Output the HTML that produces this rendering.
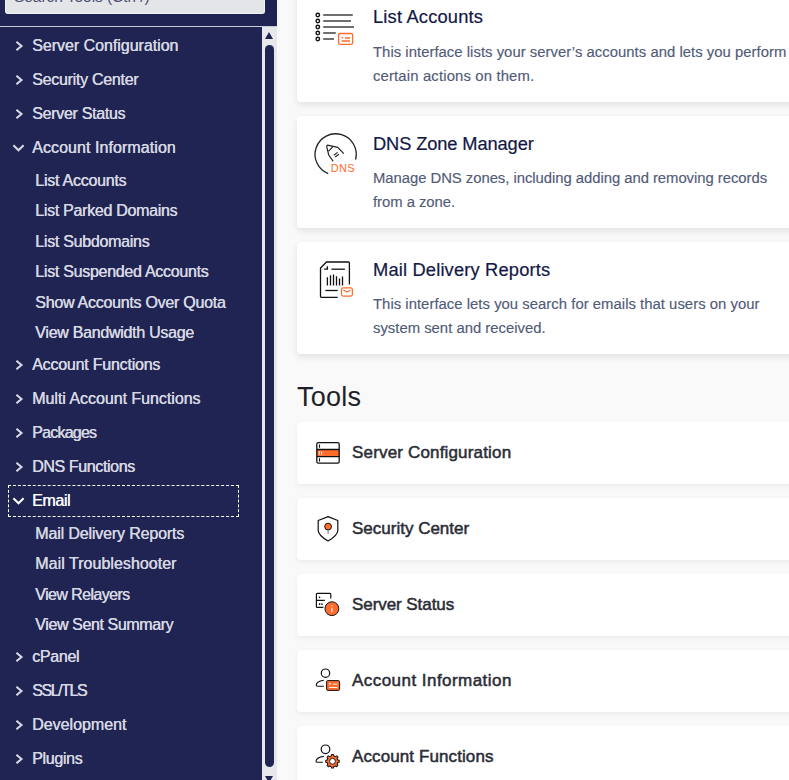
<!DOCTYPE html>
<html><head><meta charset="utf-8">
<style>
*{margin:0;padding:0;box-sizing:border-box}
html,body{width:789px;height:780px;overflow:hidden;background:#f9f9f9;font-family:"Liberation Sans",sans-serif}
#side{position:absolute;left:0;top:0;width:277px;height:780px;background:#1f2452;overflow:hidden}
#search{position:absolute;left:5px;top:-20px;width:260px;height:34px;background:#e4e5e9;border-radius:0 0 3px 3px;overflow:hidden;border:1px solid #f3f3f6;border-top:0}
#search span{position:absolute;left:8px;top:8.2px;letter-spacing:-0.05px;font-size:15.5px;color:#4b5071;white-space:nowrap}
#hline{position:absolute;left:0;top:26px;width:277px;height:1px;background:#c9cbd6}
#track{position:absolute;left:262px;top:27px;width:15px;height:753px;background:#e7e8eb}
#thumb{position:absolute;left:265px;top:45px;width:9px;height:722px;background:#1f2452;border-radius:5px}
.arr{position:absolute;left:265px;width:0;height:0;border-left:4.5px solid transparent;border-right:4.5px solid transparent}
.it{position:absolute;white-space:nowrap;color:#d6d7e1;font-size:16px;line-height:20px;text-shadow:0.4px 0 0 #d6d7e1}
.top{left:32px}
.sub{left:35.1px}
#focus{position:absolute;left:8px;top:485px;width:231px;height:32px;border:1px dashed #fff}
#main{position:absolute;left:277px;top:0;width:512px;height:780px;background:#f9f9f9}
.card{position:absolute;left:297px;width:560px;background:#fff;border-radius:4px;box-shadow:0 3px 6px rgba(35,45,75,.11)}
.ttl{position:absolute;left:373px;font-size:18.3px;color:#131845;white-space:nowrap;line-height:22px;-webkit-text-stroke:0.2px #131845}
.dsc{position:absolute;left:373px;font-size:14.85px;color:#505b78;white-space:nowrap;line-height:24px;-webkit-text-stroke:0.15px #505b78}
.tname{position:absolute;left:352px;font-size:17px;font-weight:normal;color:#2a2c35;white-space:nowrap;line-height:20px;-webkit-text-stroke:0.5px #2a2c35}
.tools{position:absolute;font-size:27px;color:#1e1f29;line-height:32px;white-space:nowrap}
svg{position:absolute;overflow:visible}
.tc{box-shadow:0 2px 5px rgba(35,45,75,.065)}

</style></head><body>
<div id="main"></div>
<div class="card" style="top:-10px;height:112px"></div>
<div class="card" style="top:116px;height:112px"></div>
<div class="card" style="top:242px;height:112px"></div>
<div class="card tc" style="top:422px;height:62px"></div>
<div class="card tc" style="top:498px;height:62px"></div>
<div class="card tc" style="top:574px;height:62px"></div>
<div class="card tc" style="top:650px;height:62px"></div>
<div class="card tc" style="top:726px;height:62px"></div>
<svg style="left:300px;top:0px" width="70" height="60" viewBox="300 0 70 60">
<g fill="none" stroke="#111" stroke-width="1.4">
<circle cx="317.8" cy="15" r="1.75"/><circle cx="317.8" cy="21" r="1.75"/><circle cx="317.8" cy="27" r="1.75"/><circle cx="317.8" cy="33" r="1.75"/><circle cx="317.8" cy="39" r="1.75"/>
</g>
<g stroke="#6f6f6f" stroke-width="1.9">
<path d="M323.2 15H352.8M323.2 21H351M323.2 27H354M323.2 33H335.8M323.2 39H334"/>
</g>
<rect x="338.6" y="33.5" width="14" height="10.8" rx="1.6" fill="#fff" stroke="#ff6c2c" stroke-width="1.3"/>
<circle cx="342.3" cy="37.6" r="0.9" fill="#ff6c2c"/>
<path d="M345 38H350M341.5 41H350" stroke="#ff6c2c" stroke-width="1.3"/>
</svg>
<svg style="left:300px;top:120px" width="70" height="70" viewBox="300 120 70 70">
<path d="M355.6 159.5 A20.6 20.6 0 1 0 328.2 173.6" fill="none" stroke="#222" stroke-width="1.3"/>
<path d="M333.2 161.3 L328.7 155 L326.6 146.2 L327.5 145.2 L337.7 147.4 L343.8 153.7" fill="none" stroke="#222" stroke-width="1.2" stroke-linejoin="round"/>
<path d="M328.4 151.3 L332.6 147" fill="none" stroke="#222" stroke-width="1.1"/>
<path d="M333.8 155.2 L337.6 152.4 M335.2 157 L338.9 154.2" fill="none" stroke="#222" stroke-width="1.1"/>
<text x="342.9" y="172" font-family="Liberation Sans" font-size="11" fill="#ff6c2c" text-anchor="middle" letter-spacing="0.3">DNS</text>
</svg>
<svg style="left:300px;top:245px" width="70" height="70" viewBox="300 245 70 70">
<g fill="none" stroke="#111" stroke-width="1.3" stroke-linecap="butt">
<path d="M349.4 284.5 V263 Q349.4 262 348.4 262 H326.5 L320.5 268 V296.6 Q320.5 297.3 321.3 297.3 H337.7"/>
<path d="M324.2 269.2 H327.4 V266.2"/>
<path d="M331.4 269.2 H344.9"/>
<path d="M325.4 290.5 H337.7"/>
<path d="M327.4 277.3V285.4M330.5 275.3V285.4M333.5 274.4V285.4M336.5 276.2V285.4M339.5 278.4V285.4M342.5 276.4V285.4"/>
</g>
<rect x="341.5" y="287.8" width="10.9" height="8.3" rx="1.8" fill="#fff" stroke="#ff6c2c" stroke-width="1.2"/>
<path d="M343.3 290 L346.9 292 L350.5 290" fill="none" stroke="#ff6c2c" stroke-width="1.1"/>
</svg>
<div class="ttl" style="top:6.16px;left:373.00px;letter-spacing:0.184px">List Accounts</div>
<div class="dsc" style="top:39.85px;left:373.00px;letter-spacing:0.036px">This interface lists your server’s accounts and lets you perform</div>
<div class="dsc" style="top:63.85px;left:373.00px;letter-spacing:0.155px">certain actions on them.</div>
<div class="ttl" style="top:133.06px;left:373.00px;letter-spacing:-0.120px">DNS Zone Manager</div>
<div class="dsc" style="top:165.55px;left:373.00px;letter-spacing:-0.037px">Manage DNS zones, including adding and removing records</div>
<div class="dsc" style="top:189.55px;left:373.00px;letter-spacing:-0.037px">from a zone.</div>
<div class="ttl" style="top:258.56px;left:373.00px;letter-spacing:0.170px">Mail Delivery Reports</div>
<div class="dsc" style="top:291.85px;left:373.00px;letter-spacing:0.034px">This interface lets you search for emails that users on your</div>
<div class="dsc" style="top:315.95px;left:373.00px;letter-spacing:0.007px">system sent and received.</div>
<div class="tools" style="top:381.24px;left:297.00px;letter-spacing:0.250px">Tools</div>
<div class="tname" style="top:442.71px;left:352.00px;letter-spacing:0.168px">Server Configuration</div>
<div class="tname" style="top:518.71px;left:352.00px">Security Center</div>
<div class="tname" style="top:594.71px;left:352.00px;letter-spacing:-0.067px">Server Status</div>
<div class="tname" style="top:670.71px;left:352.00px;letter-spacing:0.456px">Account Information</div>
<div class="tname" style="top:746.71px;left:352.00px;letter-spacing:0.100px">Account Functions</div>
<svg style="left:300px;top:425px" width="60" height="60" viewBox="300 425 60 60">
<rect x="316.8" y="449.8" width="22.4" height="6.6" fill="#ff6c2c"/>
<rect x="316.8" y="442.6" width="22.4" height="20.6" rx="1.6" fill="none" stroke="#111" stroke-width="1.3"/>
<path d="M316.8 449.5 H339.2 M316.8 456.6 H339.2" stroke="#111" stroke-width="1.3"/>
<path d="M319.5 444.4V447.8M319.5 458.2V461.6" stroke="#111" stroke-width="1.1"/>
<path d="M319.3 451.2V454.8M321.6 451.2V454.8" stroke="#fff" stroke-width="0.9"/>
</svg>
<svg style="left:300px;top:500px" width="60" height="60" viewBox="300 500 60 60">
<path d="M328.1 516.6 L318.2 520.5 V530.6 Q318.6 535.6 328.1 541 Q337.6 535.6 337.8 530.6 V520.5 Z" fill="none" stroke="#111" stroke-width="1.2" stroke-linejoin="round"/>
<path d="M328.1 530.3 V534" stroke="#777" stroke-width="1"/>
<circle cx="328.1" cy="526.6" r="3.4" fill="#ff6c2c" stroke="#111" stroke-width="1"/>
</svg>
<svg style="left:300px;top:575px" width="60" height="60" viewBox="300 575 60 60">
<path d="M330.8 598.4 V594.4 Q330.8 593.4 329.8 593.4 H317.4 Q316.4 593.4 316.4 594.4 V606.4 Q316.4 607.4 317.4 607.4 H323.4 M316.4 600.3 H324.8" fill="none" stroke="#111" stroke-width="1.2"/>
<path d="M319.6 596.4V598.1M319.6 603.3V605M322 603.3V605" stroke="#111" stroke-width="1.3"/>
<circle cx="331.9" cy="608.7" r="6.9" fill="#ff6c2c" stroke="#111" stroke-width="1"/>
<path d="M331.9 605V606.3M331.9 607.8V612.4" stroke="#ffe6da" stroke-width="1.3"/>
</svg>
<svg style="left:300px;top:650px" width="60" height="60" viewBox="300 650 60 60">
<circle cx="325.5" cy="673.2" r="4.2" fill="none" stroke="#111" stroke-width="1.2"/>
<path d="M323.8 680.3 C319 681 316.2 683.2 316.2 685.3 C316.2 686.4 318 686.3 323.8 686.3" fill="none" stroke="#111" stroke-width="1.1"/>
<rect x="326.6" y="680.6" width="13" height="9.8" rx="1.2" fill="#ff6c2c" stroke="#111" stroke-width="1"/>
<circle cx="329.9" cy="683.7" r="0.9" fill="#fff"/>
<path d="M333 684.2H337.3M329.2 687.5H337.4" stroke="#fff" stroke-width="0.9"/>
</svg>
<svg style="left:300px;top:725px" width="60" height="60" viewBox="300 725 60 60">
<circle cx="325.5" cy="749.3" r="4.3" fill="none" stroke="#111" stroke-width="1.2"/>
<path d="M324 756.2 C319 757 316 759.4 316 761.4 C316 762.4 318 762.3 322.8 762.3" fill="none" stroke="#111" stroke-width="1.1"/>
<path d="M331.22 755.95 L331.59 754.56 L333.41 754.56 L333.78 755.95 L335.37 756.61 L336.63 755.89 L337.91 757.17 L337.19 758.43 L337.85 760.02 L339.24 760.39 L339.24 762.21 L337.85 762.58 L337.19 764.17 L337.91 765.43 L336.63 766.71 L335.37 765.99 L333.78 766.65 L333.41 768.04 L331.59 768.04 L331.22 766.65 L329.63 765.99 L328.37 766.71 L327.09 765.43 L327.81 764.17 L327.15 762.58 L325.76 762.21 L325.76 760.39 L327.15 760.02 L327.81 758.43 L327.09 757.17 L328.37 755.89 L329.63 756.61 Z" fill="#ff6c2c" stroke="#1a1a1a" stroke-width="1.1" stroke-linejoin="round"/>
<circle cx="332.5" cy="761.3" r="2.9" fill="#fff" stroke="#111" stroke-width="0.9"/>
</svg>
<div id="side">
  <div id="search"><span>Search Tools (Ctrl /)</span></div>
  <div id="hline"></div>
<div class="it top" style="top:35.76px;letter-spacing:-0.026px">Server Configuration</div>
<svg class="chev" style="left:15px;top:40.65px" width="8" height="10" viewBox="0 0 8 10"><path d="M1.4 0.7 L6.5 5 L1.4 9.3" fill="none" stroke="#d8d9e2" stroke-width="2.1"/></svg>
<div class="it top" style="top:69.76px;letter-spacing:-0.271px">Security Center</div>
<svg class="chev" style="left:15px;top:74.65px" width="8" height="10" viewBox="0 0 8 10"><path d="M1.4 0.7 L6.5 5 L1.4 9.3" fill="none" stroke="#d8d9e2" stroke-width="2.1"/></svg>
<div class="it top" style="top:103.76px;letter-spacing:-0.292px">Server Status</div>
<svg class="chev" style="left:15px;top:108.65px" width="8" height="10" viewBox="0 0 8 10"><path d="M1.4 0.7 L6.5 5 L1.4 9.3" fill="none" stroke="#d8d9e2" stroke-width="2.1"/></svg>
<div class="it top" style="top:137.76px;letter-spacing:0.073px">Account Information</div>
<svg class="chev" style="left:12.1px;top:144.35px" width="13" height="8" viewBox="0 0 13 8"><path d="M1.4 1.3 L6.5 6.2 L11.6 1.3" fill="none" stroke="#d8d9e2" stroke-width="2.1"/></svg>
<div class="it sub" style="top:170.76px;letter-spacing:-0.242px">List Accounts</div>
<div class="it sub" style="top:200.76px;letter-spacing:-0.295px">List Parked Domains</div>
<div class="it sub" style="top:231.76px;letter-spacing:-0.278px">List Subdomains</div>
<div class="it sub" style="top:261.76px;letter-spacing:-0.282px">List Suspended Accounts</div>
<div class="it sub" style="top:292.76px;letter-spacing:-0.261px">Show Accounts Over Quota</div>
<div class="it sub" style="top:322.76px;letter-spacing:-0.278px">View Bandwidth Usage</div>
<div class="it top" style="top:354.76px;letter-spacing:-0.214px">Account Functions</div>
<svg class="chev" style="left:15px;top:359.65px" width="8" height="10" viewBox="0 0 8 10"><path d="M1.4 0.7 L6.5 5 L1.4 9.3" fill="none" stroke="#d8d9e2" stroke-width="2.1"/></svg>
<div class="it top" style="top:388.76px;letter-spacing:-0.027px">Multi Account Functions</div>
<svg class="chev" style="left:15px;top:393.65px" width="8" height="10" viewBox="0 0 8 10"><path d="M1.4 0.7 L6.5 5 L1.4 9.3" fill="none" stroke="#d8d9e2" stroke-width="2.1"/></svg>
<div class="it top" style="top:422.76px;letter-spacing:-0.771px">Packages</div>
<svg class="chev" style="left:15px;top:427.65px" width="8" height="10" viewBox="0 0 8 10"><path d="M1.4 0.7 L6.5 5 L1.4 9.3" fill="none" stroke="#d8d9e2" stroke-width="2.1"/></svg>
<div class="it top" style="top:456.76px;letter-spacing:-0.383px">DNS Functions</div>
<svg class="chev" style="left:15px;top:461.65px" width="8" height="10" viewBox="0 0 8 10"><path d="M1.4 0.7 L6.5 5 L1.4 9.3" fill="none" stroke="#d8d9e2" stroke-width="2.1"/></svg>
<div class="it top" style="top:490.76px;letter-spacing:-0.375px;color:#fff">Email</div>
<svg class="chev" style="left:12.1px;top:497.35px" width="13" height="8" viewBox="0 0 13 8"><path d="M1.4 1.3 L6.5 6.2 L11.6 1.3" fill="none" stroke="#fff" stroke-width="2.1"/></svg>
<div class="it sub" style="top:523.76px;letter-spacing:-0.150px">Mail Delivery Reports</div>
<div class="it sub" style="top:553.76px;letter-spacing:0.038px">Mail Troubleshooter</div>
<div class="it sub" style="top:584.76px;letter-spacing:-0.591px">View Relayers</div>
<div class="it sub" style="top:614.76px;letter-spacing:-0.393px">View Sent Summary</div>
<div class="it top" style="top:646.76px;letter-spacing:-0.300px">cPanel</div>
<svg class="chev" style="left:15px;top:651.65px" width="8" height="10" viewBox="0 0 8 10"><path d="M1.4 0.7 L6.5 5 L1.4 9.3" fill="none" stroke="#d8d9e2" stroke-width="2.1"/></svg>
<div class="it top" style="top:680.76px;letter-spacing:-1.433px">SSL/TLS</div>
<svg class="chev" style="left:15px;top:685.65px" width="8" height="10" viewBox="0 0 8 10"><path d="M1.4 0.7 L6.5 5 L1.4 9.3" fill="none" stroke="#d8d9e2" stroke-width="2.1"/></svg>
<div class="it top" style="top:714.76px;letter-spacing:0.000px">Development</div>
<svg class="chev" style="left:15px;top:719.65px" width="8" height="10" viewBox="0 0 8 10"><path d="M1.4 0.7 L6.5 5 L1.4 9.3" fill="none" stroke="#d8d9e2" stroke-width="2.1"/></svg>
<div class="it top" style="top:748.76px;letter-spacing:-0.333px">Plugins</div>
<svg class="chev" style="left:15px;top:753.65px" width="8" height="10" viewBox="0 0 8 10"><path d="M1.4 0.7 L6.5 5 L1.4 9.3" fill="none" stroke="#d8d9e2" stroke-width="2.1"/></svg>
<div id="focus"></div>
  <div id="track"></div>
  <div id="thumb"></div>
  <div class="arr" style="top:32px;border-bottom:7px solid #1f2452"></div>
  <div class="arr" style="top:776px;border-top:7px solid #1f2452"></div>
</div>

</body></html>
